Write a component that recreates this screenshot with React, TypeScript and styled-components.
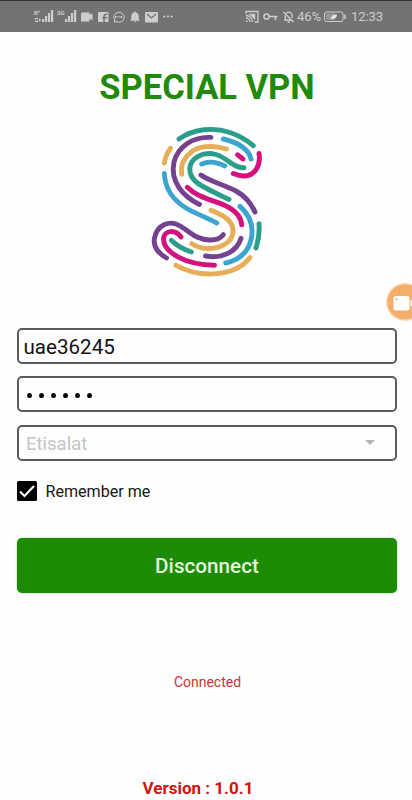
import React from "react";
import styled, { createGlobalStyle } from "styled-components";

const GlobalStyle = createGlobalStyle`
  * {
    box-sizing: border-box;
  }

  body {
    margin: 0;
    background-color: #fefefe;
    font-family: Roboto, sans-serif;
  }
`;

const Screen = styled.div`
  position: relative;
  display: flex;
  flex-direction: column;
  width: 412px;
  height: 800px;
  overflow: hidden;
  background-color: #fefefe;
`;

const StatusBar = styled.header`
  display: flex;
  justify-content: space-between;
  height: 32px;
  padding: 0 29px 0 33px;
  border-top: 1px solid #333;
  background-color: #737373;
  color: #cdcdcd;
`;

const StatusIcons = styled.svg`
  display: block;
  height: 31px;
`;

const StatusGroup = styled.div`
  display: flex;
  align-items: center;
`;

const StatusText = styled.span<{ $width: number }>`
  width: ${({ $width }) => $width}px;
  font-size: 13.2px;
  line-height: 31px;
  letter-spacing: -0.2px;
  white-space: nowrap;
`;

const Content = styled.main`
  display: flex;
  flex-direction: column;
  flex: 1;
  padding: 34px 15px 0 17px;
`;

const Title = styled.h1`
  margin: 0;
  color: #218a0c;
  font-size: 34.5px;
  font-weight: 700;
  line-height: 42px;
  text-align: center;
  white-space: nowrap;
`;

const Logo = styled.svg`
  display: block;
  align-self: center;
  width: 116px;
  height: 158px;
  margin: 14px 0 48px 2px;
  fill: none;
  stroke-width: 4.9;
  stroke-linecap: round;
`;

const Fields = styled.div`
  display: flex;
  flex-direction: column;
  gap: 12.3px;
`;

const Field = styled.div<{ $inset: number }>`
  display: flex;
  align-items: center;
  height: 36px;
  padding: 2px 20px 0 ${({ $inset }) => $inset}px;
  border: 2px solid #5a5a5a;
  border-radius: 5px;
  color: #111;
  font-size: 20.6px;
`;

const Dots = styled.div`
  display: flex;
  gap: 7.2px;
`;

const Dot = styled.span`
  width: 5px;
  height: 5.6px;
  border-radius: 50%;
  background-color: #000;
`;

const Provider = styled.span`
  flex: 1;
  color: #c4c4c4;
  font-size: 18.5px;
`;

const Caret = styled.span`
  margin-bottom: 2px;
  border: 5.5px solid transparent;
  border-top-color: #b5b5b5;
  border-bottom: 0;
`;

const Remember = styled.label`
  display: flex;
  align-items: center;
  gap: 8.5px;
  height: 20px;
  margin-top: 20px;
  color: #161616;
  font-size: 16.1px;
  line-height: 20px;
`;

const RememberText = styled.span`
  padding-top: 2px;
`;

const Check = styled.svg`
  width: 20px;
  height: 20px;
`;

const DisconnectButton = styled.button`
  height: 55px;
  margin-top: 37px;
  padding: 2px 0 0;
  border: 0;
  border-radius: 5px;
  background-color: #1e8b06;
  box-shadow: 0 0 2px rgba(30, 139, 6, 0.5);
  color: #e2f6dc;
  font-family: inherit;
  font-size: 20.7px;
  font-weight: 500;
`;

const Connection = styled.p`
  margin: 79px 0 0 1px;
  color: #c93434;
  font-size: 14px;
  line-height: 20px;
  text-align: center;
`;

const Version = styled.p`
  margin: 84px 18px 0 0;
  color: #d41212;
  font-size: 17px;
  font-weight: 700;
  line-height: 24px;
  text-align: center;
`;

// Floating screen recorder bubble, half docked into the right edge
const Recorder = styled.svg`
  position: absolute;
  top: 280px;
  right: 0;
  width: 28px;
  height: 44px;
`;

const TEAL = "#2a9d8b";
const PURPLE = "#754290";
const ORANGE = "#e6ae58";
const BLUE = "#3ba5cf";
const PINK = "#d3127f";

const strands: [string, string][] = [
  [TEAL, "M179 139C194 128.5 214 127 230 132.5Q243 137 253.3 145.6"],
  [PURPLE, "M211 137.4C192 136.5 178 147 174 162C170 181 182 196 199.5 204.5"],
  [ORANGE, "M226.5 149C212 144.5 198 146 190 153C183 159 180.5 167 181.7 174.3"],
  [ORANGE, "M170.5 148.3Q165.5 155 164.4 163"],
  [BLUE, "M164.3 173.5C165 188 173 200 186 208C196 214 206 217 216.7 223"],
  [TEAL, "M244 167.7C233 168.5 228 158 216 154.5C203 151 190 158 189.8 169C189.5 183 205 187.5 229 199.5"],
  [BLUE, "M201.7 164Q212 159.5 224.8 166"],
  [PURPLE, "M201 175C209 181 222 184 236 191C245 196 251 203 255 212"],
  [PINK, "M187.3 187.3C197 197 211 199.5 224 205C235 210 241 216 241.7 224.7"],
  [BLUE, "M223.3 139C237 142 249 149 251 159"],
  [PINK, "M237.5 154.8L243 159"],
  [PINK, "M259 153.5C261 165 255 175.5 245 176Q239 176 233.3 173.5"],
  [ORANGE, "M211 210.3C225 216 233.5 221 233 232C232 244 218 249 207 248.5Q199 248.3 191.7 243.7"],
  [PURPLE, "M166.5 258C158 253 153 246 154.5 238C157 225 170 219 181 226.5C190 232 197 240.5 211 240Q219 240 223.3 234.7"],
  [PINK, "M181 237C175 229 164 230 163.5 239C163.5 252 185 265 214.5 265.3"],
  [TEAL, "M171.3 240.3Q179 248 191.3 252"],
  [PURPLE, "M205.5 256C222 259 237 252 241 238.3"],
  [BLUE, "M240 206.3C251 216 254 227 251 240C248 252 239 260 225.7 263"],
  [TEAL, "M259 223.7Q260 236 256 248"],
  [ORANGE, "M176 265.3C200 278.5 235 277 250 257.5"],
];

const bars = [0, 3, 6, 9];

const App: React.FC = () => (
  <>
    <GlobalStyle />
    <Screen>
      <StatusBar>
        <StatusIcons width="142" viewBox="33 1 142 31" fill="currentColor">
          <text x="34" y="15" fontSize="6" fontWeight="700">R⁺</text>
          <path d="M35 18h3v1h-2v1h2v2h-3v-1h2v-1h-2zM39 18l2 2-2 2z" />
          {bars.map((b) => (
            <rect key={b} x={42 + b} y={19 - b} width="2.2" height={3 + b} />
          ))}
          <text x="57" y="15" fontSize="6" fontWeight="700">3G</text>
          {bars.map((b) => (
            <rect key={b} x={65 + b} y={19 - b} width="2.2" height={3 + b} />
          ))}
          <path d="M82 12.500h7.500v2l3-1v6.500l-3-1v2.500H81v-8z" />
          <rect x="98" y="12" width="10.500" height="10" rx=".8" />
          <path d="M104 22v-5.500q0-2.200 2.500-2.200h1M102.300 17.700h5" fill="none" stroke="#737373" strokeWidth="1.500" />
          <g fill="none" stroke="currentColor" strokeWidth="1">
            <path d="M116 21.300l-1.500 1 .2-2.300a5.200 5 0 1 1 1.300 1.300z" />
            <path d="M115.500 18v-2l1.500 1.500 1.500-1.500 1.500 1.500 1.500-1.500V18" />
          </g>
          <path d="M135 11.500a1 1 0 0 1 1 1q2.800.8 2.800 4.300v2.500l1.300 1.400h-10.200l1.300-1.400v-2.500q0-3.500 2.800-4.300a1 1 0 0 1 1-1zM133.700 21.300h2.800q-1.400 1.700-2.800 0z" />
          <rect x="145" y="12" width="13" height="10.500" rx="1" />
          <path d="M147 14l4.500 4 4.500-4" fill="none" stroke="#737373" strokeWidth="1.300" />
          <circle cx="164.300" cy="16.500" r="1.100" />
          <circle cx="168" cy="16.500" r="1.100" />
          <circle cx="171.700" cy="16.500" r="1.100" />
        </StatusIcons>
        <StatusGroup>
          <StatusIcons width="52" viewBox="245 1 52 31" fill="none" stroke="currentColor">
            <path d="M246 14v-2.500h12V22h-3.500M246 15.500a6.500 6.500 0 0 1 6.500 6.500M246 18a4 4 0 0 1 4 4" strokeWidth="1.300" />
            <path d="M249 14h6v5.500z" fill="currentColor" strokeWidth=".5" />
            <path d="M246 20v2h2z" fill="currentColor" stroke="none" />
            <circle cx="266.500" cy="16.500" r="2.600" strokeWidth="1.500" />
            <path d="M269 16.500h8.500M275.500 16.500V20" strokeWidth="1.700" />
            <path d="M284 20h7.500M285.300 20v-4.500M286.500 13.300q1.200-1.200 2.500-1.200 3.200.5 3.200 4v2M287.500 22h2.500M283.500 12l10 10" strokeWidth="1.300" />
          </StatusIcons>
          <StatusText $width={27}>46%</StatusText>
          <StatusIcons width="27" viewBox="324 1 27 31" fill="none" stroke="currentColor">
            <rect x="324.500" y="12" width="18.500" height="9.500" rx="2" strokeWidth="1" />
            <rect x="326" y="13.500" width="9" height="6.500" fill="#969696" stroke="none" />
            <path d="M331 19.300q-.5-4.800 6-4.800-.5 4.800-4.700 4.300l-1 1z" fill="#e6e6e6" stroke="none" />
            <path d="M345 14.500v4.500" strokeWidth="1.500" />
          </StatusIcons>
          <StatusText $width={32}>12:33</StatusText>
        </StatusGroup>
      </StatusBar>

      <Content>
        <Title>SPECIAL VPN</Title>
        <Logo viewBox="150 122 116 158">
          {strands.map(([color, d]) => (
            <path key={d} d={d} stroke={color} />
          ))}
        </Logo>

        <Fields>
          <Field $inset={4.5}>uae36245</Field>
          <Field $inset={7.5}>
            <Dots>
              {[1, 2, 3, 4, 5, 6].map((n) => (
                <Dot key={n} />
              ))}
            </Dots>
          </Field>
          <Field $inset={7}>
            <Provider>Etisalat</Provider>
            <Caret />
          </Field>
        </Fields>

        <Remember>
          <Check viewBox="0 0 20 20">
            <rect width="20" height="20" rx="1.500" fill="#000" />
            <path d="M3 10.500l4.500 4.500L17 5" fill="none" stroke="#fff" strokeWidth="2" />
          </Check>
          <RememberText>Remember me</RememberText>
        </Remember>

        <DisconnectButton type="button">Disconnect</DisconnectButton>
        <Connection>Connected</Connection>
        <Version>Version : 1.0.1</Version>
      </Content>

      <Recorder viewBox="384 280 28 44">
        <circle cx="405" cy="302" r="19" fill="#fbd9b5" />
        <circle cx="405" cy="302" r="17.500" fill="#f5ad6c" />
        <rect x="393.500" y="296" width="16" height="14.500" rx="2" fill="#fffdf8" />
        <path d="M410.500 301l3-2v9l-3-2z" fill="#fffdf8" />
        <circle cx="396.700" cy="299.300" r="1" fill="#dba878" />
      </Recorder>
    </Screen>
  </>
);

export default App;
